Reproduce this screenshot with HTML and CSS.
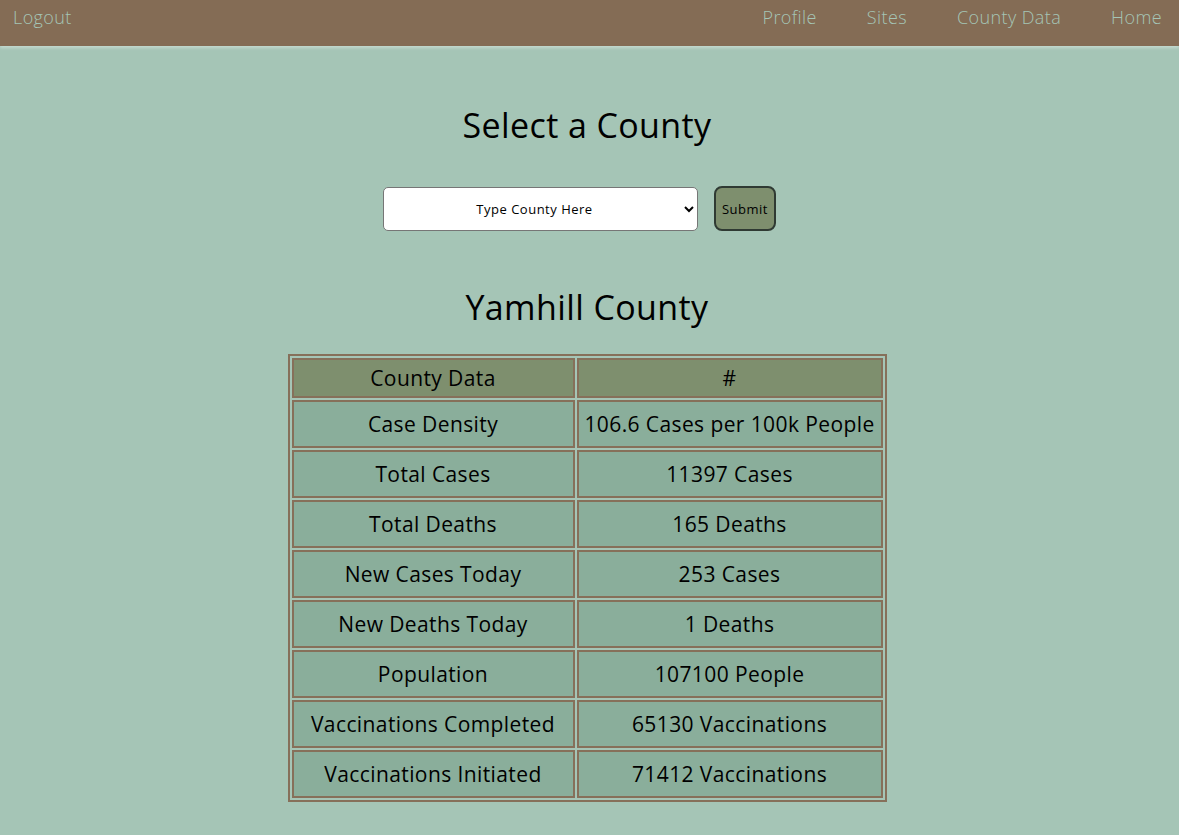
FILE: index.html
```html
<!DOCTYPE html>
<html lang="en">
<head>
<meta charset="utf-8">
<title>County Data</title>
<link rel="stylesheet" href="styles.css">
</head>
<body>
<nav class="navbar">
  <a class="nav-link" href="#">Logout</a>
  <div class="nav-right">
    <a class="nav-link" href="#">Profile</a>
    <a class="nav-link" href="#">Sites</a>
    <a class="nav-link" href="#">County Data</a>
    <a class="nav-link" href="#">Home</a>
  </div>
</nav>
<main class="content">
  <h1 class="title">Select a County</h1>
  <form class="county-form">
    <select class="county-select">
      <option>Type County Here</option>
    </select>
    <button type="button" class="submit-btn">Submit</button>
  </form>
  <h2 class="title county-name">Yamhill County</h2>
  <table class="data-table">
    <thead>
      <tr><th>County Data</th><th>#</th></tr>
    </thead>
    <tbody>
      <tr><td>Case Density</td><td>106.6 Cases per 100k People</td></tr>
      <tr><td>Total Cases</td><td>11397 Cases</td></tr>
      <tr><td>Total Deaths</td><td>165 Deaths</td></tr>
      <tr><td>New Cases Today</td><td>253 Cases</td></tr>
      <tr><td>New Deaths Today</td><td>1 Deaths</td></tr>
      <tr><td>Population</td><td>107100 People</td></tr>
      <tr><td>Vaccinations Completed</td><td>65130 Vaccinations</td></tr>
      <tr><td>Vaccinations Initiated</td><td>71412 Vaccinations</td></tr>
    </tbody>
  </table>
</main>
</body>
</html>
```
FILE: styles.css
```css
* { box-sizing: border-box; }
html, body {
  margin: 0;
  padding: 0;
}
body {
  background: #a5c5b6;
  font-family: "Open Sans", "DejaVu Sans", sans-serif;
  color: #000;
  min-height: 835px;
}
.navbar {
  height: 46px;
  background: #846c55;
  display: flex;
  justify-content: space-between;
  align-items: flex-start;
  padding: 5px 17px 0 13px;
  box-shadow: 0 2px 3px rgba(255,255,255,0.35);
}
.nav-right {
  display: flex;
  gap: 50px;
}
.nav-link {
  color: #a5c5b6;
  text-decoration: none;
  font-size: 18px;
  font-weight: 300;
  letter-spacing: 0.4px;
  line-height: 24px;
}
.content {
  display: flex;
  flex-direction: column;
  align-items: center;
  padding-right: 5px;
}
.title {
  font-size: 34px;
  font-weight: 500;
  letter-spacing: 0.4px;
  margin: 0;
  line-height: 40px;
}
.content > .title:first-child {
  margin-top: 59px;
}
.county-form {
  display: flex;
  align-items: center;
  gap: 16px;
  margin-top: 41px;
  margin-right: 15px;
}
.county-select {
  width: 315px;
  height: 44px;
  border: 1px solid #767676;
  border-radius: 5px;
  background: #fff;
  font-family: inherit;
  font-size: 13px;
  letter-spacing: 0.5px;
  text-align: center;
  text-align-last: center;
  color: #000;
}
.submit-btn {
  width: 62px;
  height: 45px;
  background: #7e8f6e;
  border: 2px solid #2f3a33;
  border-radius: 8px;
  font-family: inherit;
  font-size: 13px;
  letter-spacing: 0.5px;
  color: #000;
  padding: 0;
}
.county-name {
  margin-top: 56px;
}
.data-table {
  margin-top: 27px;
  border: 2px solid #86705a;
  border-spacing: 2px;
  font-size: 21px;
  letter-spacing: 0.4px;
}
.data-table th,
.data-table td {
  border: 2px solid #86705a;
  text-align: center;
  padding: 0;
  white-space: nowrap;
}
.data-table th {
  background: #7e8f6e;
  height: 40px;
  font-weight: 500;
}
.data-table td {
  background: #8aae9b;
  height: 48px;
}
.data-table th:first-child, .data-table td:first-child { width: 283px; }
.data-table th:last-child, .data-table td:last-child { width: 306px; }
```
